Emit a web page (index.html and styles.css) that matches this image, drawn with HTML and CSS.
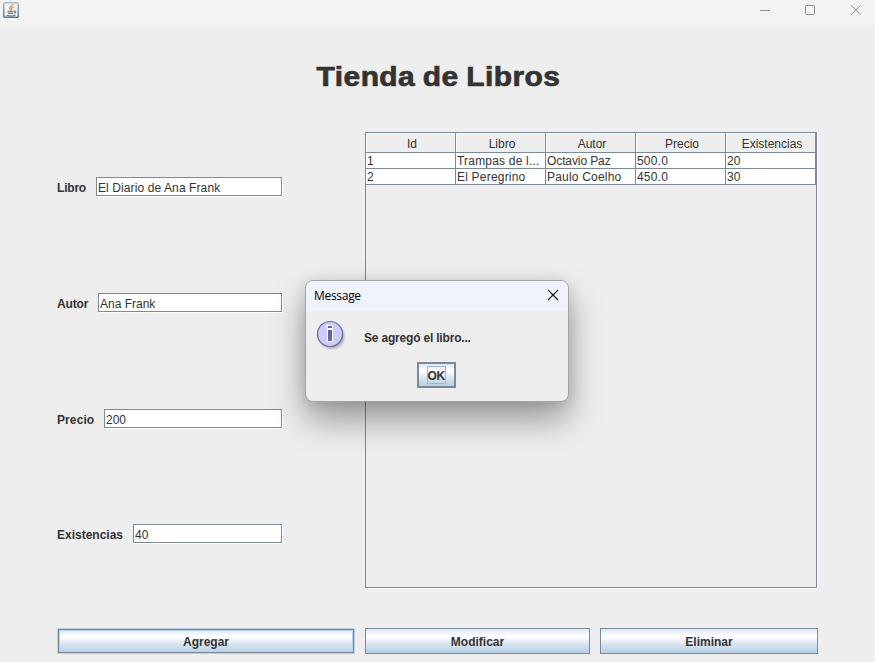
FILE: index.html
```html
<!DOCTYPE html>
<html lang="es">
<head>
<meta charset="utf-8">
<title>Tienda de Libros</title>
<link rel="stylesheet" href="styles.css">
</head>
<body>
<div class="window">
  <header class="titlebar">
    <svg class="app-icon" width="16" height="16" viewBox="0 0 16 16">
      <defs><linearGradient id="frame" x1="0" y1="0" x2="0" y2="1"><stop offset="0" stop-color="#a9bac5"/><stop offset="1" stop-color="#50788f"/></linearGradient></defs>
      <rect x=".75" y=".75" width="14.5" height="14.5" rx="1" fill="#f4f4f4" stroke="url(#frame)" stroke-width="1.5"/>
      <path d="M9.6 2C10 4 6.2 4.600 6.600 6.400C6.800 7.400 8 7.800 8 9M10.700 4.800C8.600 5.600 8.200 6.400 9.200 7.600" fill="none" stroke="#e8893a" stroke-width="1.300"/>
      <path d="M4.500 9.700H10.500M5 11.500H10M11 9.300C13.600 8.800 13 11 10.800 11.400M3.500 13.200C6 14 10.500 14 12.500 13" fill="none" stroke="#4f7690" stroke-width="1.200"/>
    </svg>
    <svg class="controls" width="110" height="20" viewBox="0 0 110 20" fill="none" stroke="#8c8c8c">
      <path d="M5 10.500H15"/>
      <rect x="50.500" y="5.500" width="9" height="9" rx="1"/>
      <path d="M96 5.300L105.500 14.800M105.500 5.300L96 14.800"/>
    </svg>
  </header>
  <main class="content">
    <h1 class="heading"><span>Tienda de Libros</span></h1>
    <div class="columns">
      <form class="form">
        <div class="field"><label class="l1">Libro</label><div class="input v1"><span>El Diario de Ana Frank</span></div></div>
        <div class="field"><label class="l2">Autor</label><div class="input"><span>Ana Frank</span></div></div>
        <div class="field"><label class="l3">Precio</label><div class="input"><span>200</span></div></div>
        <div class="field"><label class="l4">Existencias</label><div class="input"><span>40</span></div></div>
      </form>
      <div class="scrollpane">
        <div class="row head"><div>Id</div><div>Libro</div><div>Autor</div><div>Precio</div><div>Existencias</div></div>
        <div class="row"><div class="wide">1</div><div class="wide">Trampas de l...</div><div class="tight">Octavio Paz</div><div class="wide">500.0</div><div>20</div></div>
        <div class="row"><div class="wide">2</div><div class="wide">El Peregrino</div><div class="wide">Paulo Coelho</div><div class="wide">450.0</div><div>30</div></div>
      </div>
    </div>
    <div class="actions">
      <button class="btn hover">Agregar</button>
      <button class="btn">Modificar</button>
      <button class="btn">Eliminar</button>
    </div>
  </main>
  <section class="dialog">
    <div class="dialog-title"><span>Message</span>
      <svg width="12" height="12" viewBox="0 0 12 12" stroke="#1a1a1a" stroke-width="1.100"><path d="M1 1L11 11M11 1L1 11"/></svg>
    </div>
    <div class="dialog-body">
      <svg class="info" width="36" height="36" viewBox="0 0 36 36">
        <defs><filter id="soft" x="-30%" y="-30%" width="160%" height="160%"><feGaussianBlur stdDeviation="1.200"/></filter></defs>
        <circle cx="16" cy="16.500" r="12.500" fill="#888" opacity=".6" filter="url(#soft)"/>
        <circle cx="14" cy="14" r="12.500" fill="#ccf" stroke="#669" stroke-width="1.200"/>
        <path d="M11 5H17V22H11Z" fill="#fff"/>
        <path d="M12 6H16V8H12ZM12 10H16V21H12Z" fill="#669"/>
      </svg>
      <p>Se agregó el libro...</p>
    </div>
    <button class="ok"><span>OK</span></button>
  </section>
</div>
</body>
</html>
```
FILE: styles.css
```css
* { box-sizing: border-box; }
body {
  margin: 0;
  background: #eee;
  color: #333;
  font: 12px/14px "Liberation Sans", Arial, sans-serif;
}
.window { position: relative; width: 875px; height: 662px; overflow: hidden; }
.titlebar {
  display: flex;
  justify-content: space-between;
  height: 26px;
  padding: 2px 10px 0 3px;
  background: #f3f3f3;
}
.controls { margin-top: -2px; }
.content { padding: 0 57px; }
.heading {
  height: 106px;
  margin: 0;
  padding-top: 35px;
  text-align: center;
  font-size: 27px;
  line-height: 32px;
  font-weight: bold;
  letter-spacing: .4px;
  word-spacing: -1px;
  -webkit-text-stroke: .7px #333;
  stroke-linejoin: round;
}
.heading span { display: inline-block; transform: translateX(.5px) scaleX(1.108); }
.columns { display: flex; justify-content: space-between; }
.form {
  display: flex;
  flex-direction: column;
  gap: 97px;
  width: 225px;
  margin-top: 45px;
}
.field { display: flex; align-items: flex-start; gap: 10px; height: 19px; }
.field:last-child { margin-top: -1px; }
.field label { flex: none; padding-top: 4px; font-weight: bold; white-space: nowrap; }
.l1 { width: 29px; letter-spacing: -.2px; }
.l2 { width: 31px; letter-spacing: -.15px; }
.l3 { width: 37px; letter-spacing: .1px; }
.l4 { width: 66px; }
.input {
  flex: 1;
  height: 19px;
  padding: 3px 0 0 1px;
  border: 1px solid #7a8a99;
  background: #fff;
  box-shadow: 1px 1px #fff;
  white-space: nowrap;
}
.v1 { letter-spacing: .1px; }
.scrollpane {
  width: 452px;
  height: 456px;
  margin-right: 1px;
  border: 1px solid #7a8a99;
  box-shadow: 1px 1px #fff;
}
.row { display: grid; grid-template-columns: repeat(5, 90px); height: 16px; background: #fff; }
.row > div {
  padding: 1px 0 0 1px;
  border-right: 1px solid #7a8a99;
  border-bottom: 1px solid #7a8a99;
  white-space: nowrap;
}
.row .wide { letter-spacing: .2px; }
.row .tight { letter-spacing: -.1px; }
.row.head { height: 20px; background: #eee; text-align: center; }
.row.head > div { padding: 4px 0 0 3px; box-shadow: inset 1px 1px #fff; }
.actions {
  display: grid;
  grid-template-columns: 298px 225px 218px;
  column-gap: 10px;
  margin-top: 40px;
}
.btn, .ok {
  height: 26px;
  padding: 1px 0 0;
  border: 1px solid #7a8a99;
  background: linear-gradient(#dde8f3 0%, #fff 30%, #fff 34%, #dce7f2 60%, #b8cfe5 100%);
  color: #333;
  font: bold 12px/14px "Liberation Sans", Arial, sans-serif;
}
.btn.hover {
  border-color: #b8cfe5;
  box-shadow: inset 0 0 0 1px #7a8a99, inset 0 0 0 2px #b8cfe5;
}
.dialog {
  position: absolute;
  left: 305px;
  top: 280px;
  width: 264px;
  height: 122px;
  border: 1px solid #a4a4a4;
  border-radius: 8px;
  background: #eee;
  box-shadow: 0 18px 34px rgba(0, 0, 0, .36), 0 1px 14px rgba(0, 0, 0, .1);
}
.dialog-title {
  display: flex;
  justify-content: space-between;
  align-items: center;
  height: 30px;
  padding: 0 9px 2px 8px;
  border-radius: 7px 7px 0 0;
  background: #f0f3fb;
  color: #000;
  font-family: "Open Sans", "Noto Sans", sans-serif;
  font-size: 12px;
  letter-spacing: -.3px;
}
.dialog-title span { padding-top: 1px; }
.dialog-body { display: flex; height: 51px; padding: 9px 0 0 10px; }
.dialog-body p { margin: 11px 0 0 12px; font-weight: bold; letter-spacing: -.19px; }
.ok {
  display: block;
  width: 39px;
  margin-left: 111px;
  padding: 2px 8px;
  border-width: 2px;
}
.ok span { display: block; height: 18px; padding-top: 2px; border: 1px solid #a3b8cc; text-indent: -.5px; letter-spacing: -.3px; }
```
